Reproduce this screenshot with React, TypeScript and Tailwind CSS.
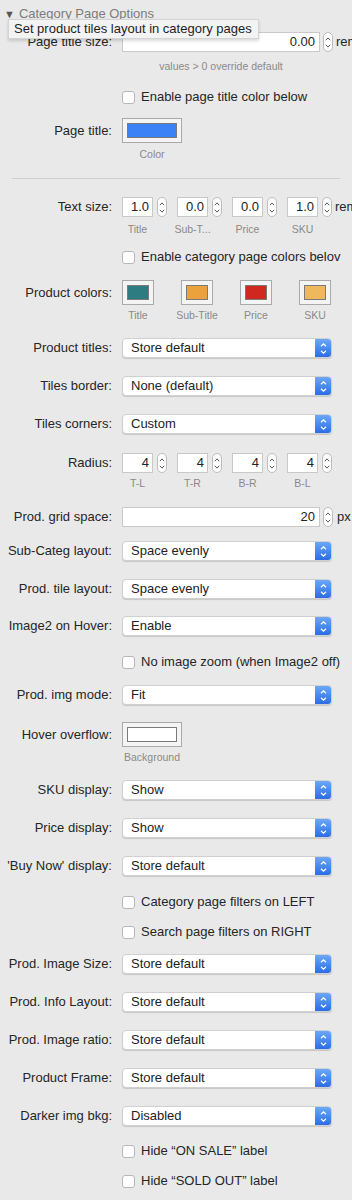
import React from "react";

const font = { fontFamily: '"Liberation Sans", Arial, sans-serif' };

function Label({ children }: { children?: React.ReactNode }) {
  return (
    <div className="w-[112px] shrink-0 text-right text-[13px] leading-[16px] text-[#262626] whitespace-nowrap">
      {children}
    </div>
  );
}

function Gap() {
  return <div className="w-[10px] shrink-0" />;
}

function Stepper() {
  return (
    <div className="w-[10px] h-[20px] rounded-full bg-white border border-[#bdbdbd] flex flex-col items-center justify-center gap-[3px] shrink-0">
      <svg width="6" height="4" viewBox="0 0 6 4">
        <path d="M0.8 3.2 L3 0.9 L5.2 3.2" fill="none" stroke="#555" strokeWidth="1" />
      </svg>
      <svg width="6" height="4" viewBox="0 0 6 4">
        <path d="M0.8 0.8 L3 3.1 L5.2 0.8" fill="none" stroke="#555" strokeWidth="1" />
      </svg>
    </div>
  );
}

function SelectRow({ label, value, mt = "mt-[18px]" }: { label: string; value: string; mt?: string }) {
  return (
    <div className={`flex items-center h-[20px] ${mt}`}>
      <Label>{label}</Label>
      <Gap />
      <div className="w-[210px] h-[20px] shrink-0 flex rounded-[4px] bg-white border border-[#d0d0d0] shadow-[0_1px_1px_rgba(0,0,0,0.15)] overflow-hidden">
        <div className="flex-1 pl-[8px] text-[13px] leading-[18px] text-[#222]">{value}</div>
        <div className="w-[16px] h-full bg-gradient-to-b from-[#6ba8f8] to-[#2b6de6] flex flex-col items-center justify-center gap-[3px]">
          <svg width="7" height="4" viewBox="0 0 7 4">
            <path d="M1 3.3 L3.5 0.9 L6 3.3" fill="none" stroke="#fff" strokeWidth="1.2" />
          </svg>
          <svg width="7" height="4" viewBox="0 0 7 4">
            <path d="M1 0.7 L3.5 3.1 L6 0.7" fill="none" stroke="#fff" strokeWidth="1.2" />
          </svg>
        </div>
      </div>
    </div>
  );
}

function CheckRow({ text, mt }: { text: string; mt: string }) {
  return (
    <div className={`flex items-center h-[16px] ${mt}`}>
      <div className="w-[122px] shrink-0" />
      <div className="w-[13px] h-[13px] rounded-[3px] bg-white border border-[#b8b8b8] shrink-0" />
      <div className="ml-[6px] text-[13px] leading-[16px] text-[#262626] whitespace-nowrap">{text}</div>
    </div>
  );
}

function Well({ color, w = "w-[32px]" }: { color: string; w?: string }) {
  return (
    <div className={`${w} h-[25px] bg-[#f4f4f4] border border-[#a9a9a9] p-[4px] shrink-0`}>
      <div className="w-full h-full border border-[#7a7a7a]" style={{ backgroundColor: color }} />
    </div>
  );
}

function SmallNum({ v }: { v: string }) {
  return (
    <div className="flex items-center w-[55px] shrink-0">
      <div className="w-[31px] h-[20px] shrink-0 bg-white border border-[#c9c9c9] text-right pr-[3px] text-[13px] leading-[18px] text-[#222]">
        {v}
      </div>
      <div className="w-[4px] shrink-0" />
      <Stepper />
    </div>
  );
}

function SubLabels({ items, mt }: { items: string[]; mt: string }) {
  return (
    <div className={`flex h-[12px] ${mt}`}>
      <div className="w-[122px] shrink-0" />
      {items.map((t) => (
        <div key={t} className="w-[55px] shrink-0">
          <div className="w-[31px] flex justify-center text-[10.5px] leading-[12px] text-[#8a8a8a] whitespace-nowrap">
            {t}
          </div>
        </div>
      ))}
    </div>
  );
}

export default function App() {
  return (
    <div className="w-[352px] min-h-[1200px] bg-[#e9e9e9] overflow-hidden relative" style={font}>
      {/* header */}
      <div className="h-[32px] pt-[6px] flex items-start">
        <div className="flex items-center h-[16px] pl-[4px]">
          <span className="text-[11px] text-[#555] leading-[16px]">▼</span>
          <span className="ml-[4px] text-[13px] leading-[16px] text-[#7c7c7c]">Category Page Options</span>
        </div>
      </div>
      <div className="absolute left-[8px] top-[19px] h-[20px] w-[251px] bg-[#f3f3f3] border border-[#d4d4d4] shadow-[0_2px_3px_rgba(0,0,0,0.15)] pl-[5px] text-[13px] leading-[18px] text-[#1e1e1e] whitespace-nowrap z-10">
        Set product tiles layout in category pages
      </div>

      {/* Page title size */}
      <div className="flex items-center h-[20px]">
        <Label>Page title size:</Label>
        <Gap />
        <div className="w-[198px] h-[20px] shrink-0 bg-white border border-[#c9c9c9] text-right pr-[4px] text-[13px] leading-[18px] text-[#222]">
          0.00
        </div>
        <div className="w-[3px] shrink-0" />
        <Stepper />
        <div className="ml-[3px] shrink-0 text-[13px] leading-[16px] text-[#262626]">rem</div>
      </div>
      <div className="mt-[8px] h-[12px] flex">
        <div className="w-[122px] shrink-0" />
        <div className="w-[198px] shrink-0 text-center text-[10.5px] leading-[12px] text-[#8a8a8a]">values &gt; 0 override default</div>
      </div>

      <CheckRow text="Enable page title color below" mt="mt-[17px]" />

      <div className="flex items-center h-[25px] mt-[13px]">
        <Label>Page title:</Label>
        <Gap />
        <Well color="#3b82f7" w="w-[60px]" />
      </div>
      <div className="flex h-[12px] mt-[5px]">
        <div className="w-[122px] shrink-0" />
        <div className="w-[60px] text-center text-[10.5px] leading-[12px] text-[#8a8a8a]">Color</div>
      </div>

      <div className="mt-[18px] mx-[12px] h-px bg-[#cfcfcf]" />

      {/* Text size */}
      <div className="flex items-center h-[20px] mt-[18px]">
        <Label>Text size:</Label>
        <Gap />
        <SmallNum v="1.0" />
        <SmallNum v="0.0" />
        <SmallNum v="0.0" />
        <div className="flex items-center shrink-0">
          <div className="w-[31px] h-[20px] shrink-0 bg-white border border-[#c9c9c9] text-right pr-[3px] text-[13px] leading-[18px] text-[#222]">
            1.0
          </div>
          <div className="w-[4px] shrink-0" />
          <Stepper />
          <div className="ml-[3px] shrink-0 text-[13px] leading-[16px] text-[#262626]">rem</div>
        </div>
      </div>
      <SubLabels items={["Title", "Sub-T...", "Price", "SKU"]} mt="mt-[6px]" />

      <CheckRow text="Enable category page colors belov" mt="mt-[14px]" />

      {/* Product colors */}
      <div className="flex items-center h-[25px] mt-[15px]">
        <Label>Product colors:</Label>
        <Gap />
        <div className="flex gap-[27px] shrink-0">
          <Well color="#2c7c82" />
          <Well color="#eba23c" />
          <Well color="#d0281f" />
          <Well color="#efb85e" />
        </div>
      </div>
      <div className="flex h-[12px] mt-[4px]">
        <div className="w-[122px] shrink-0" />
        <div className="flex gap-[27px] shrink-0">
          {["Title", "Sub-Title", "Price", "SKU"].map((t) => (
            <div key={t} className="w-[32px] flex justify-center text-[10.5px] leading-[12px] text-[#8a8a8a] whitespace-nowrap">
              {t}
            </div>
          ))}
        </div>
      </div>

      <SelectRow label="Product titles:" value="Store default" mt="mt-[17px]" />
      <SelectRow label="Tiles border:" value="None (default)" />
      <SelectRow label="Tiles corners:" value="Custom" />

      {/* Radius */}
      <div className="flex items-center h-[20px] mt-[19px]">
        <Label>Radius:</Label>
        <Gap />
        <SmallNum v="4" />
        <SmallNum v="4" />
        <SmallNum v="4" />
        <SmallNum v="4" />
      </div>
      <SubLabels items={["T-L", "T-R", "B-R", "B-L"]} mt="mt-[4px]" />

      {/* Grid space */}
      <div className="flex items-center h-[20px] mt-[18px]">
        <Label>Prod. grid space:</Label>
        <Gap />
        <div className="w-[198px] h-[20px] shrink-0 bg-white border border-[#c9c9c9] text-right pr-[4px] text-[13px] leading-[18px] text-[#222]">
          20
        </div>
        <div className="w-[3px] shrink-0" />
        <Stepper />
        <div className="ml-[4px] shrink-0 text-[13px] leading-[16px] text-[#262626]">px</div>
      </div>

      <SelectRow label="Sub-Categ layout:" value="Space evenly" mt="mt-[14px]" />
      <SelectRow label="Prod. tile layout:" value="Space evenly" />
      <SelectRow label="Image2 on Hover:" value="Enable" mt="mt-[17px]" />

      <CheckRow text="No image zoom (when Image2 off)" mt="mt-[18px]" />

      <SelectRow label="Prod. img mode:" value="Fit" mt="mt-[15px]" />

      <div className="flex items-center h-[25px] mt-[17px]">
        <Label>Hover overflow:</Label>
        <Gap />
        <Well color="#ffffff" w="w-[60px]" />
      </div>
      <div className="flex h-[12px] mt-[4px]">
        <div className="w-[122px] shrink-0" />
        <div className="w-[60px] text-center text-[10.5px] leading-[12px] text-[#8a8a8a]">Background</div>
      </div>

      <SelectRow label="SKU display:" value="Show" mt="mt-[17px]" />
      <SelectRow label="Price display:" value="Show" />
      <SelectRow label="'Buy Now' display:" value="Store default" />

      <CheckRow text="Category page filters on LEFT" mt="mt-[18px]" />
      <CheckRow text="Search page filters on RIGHT" mt="mt-[14px]" />

      <SelectRow label="Prod. Image Size:" value="Store default" mt="mt-[14px]" />
      <SelectRow label="Prod. Info Layout:" value="Store default" />
      <SelectRow label="Prod. Image ratio:" value="Store default" />
      <SelectRow label="Product Frame:" value="Store default" />
      <SelectRow label="Darker img bkg:" value="Disabled" />

      <CheckRow text="Hide “ON SALE” label" mt="mt-[17px]" />
      <CheckRow text="Hide “SOLD OUT” label" mt="mt-[14px]" />
    </div>
  );
}
